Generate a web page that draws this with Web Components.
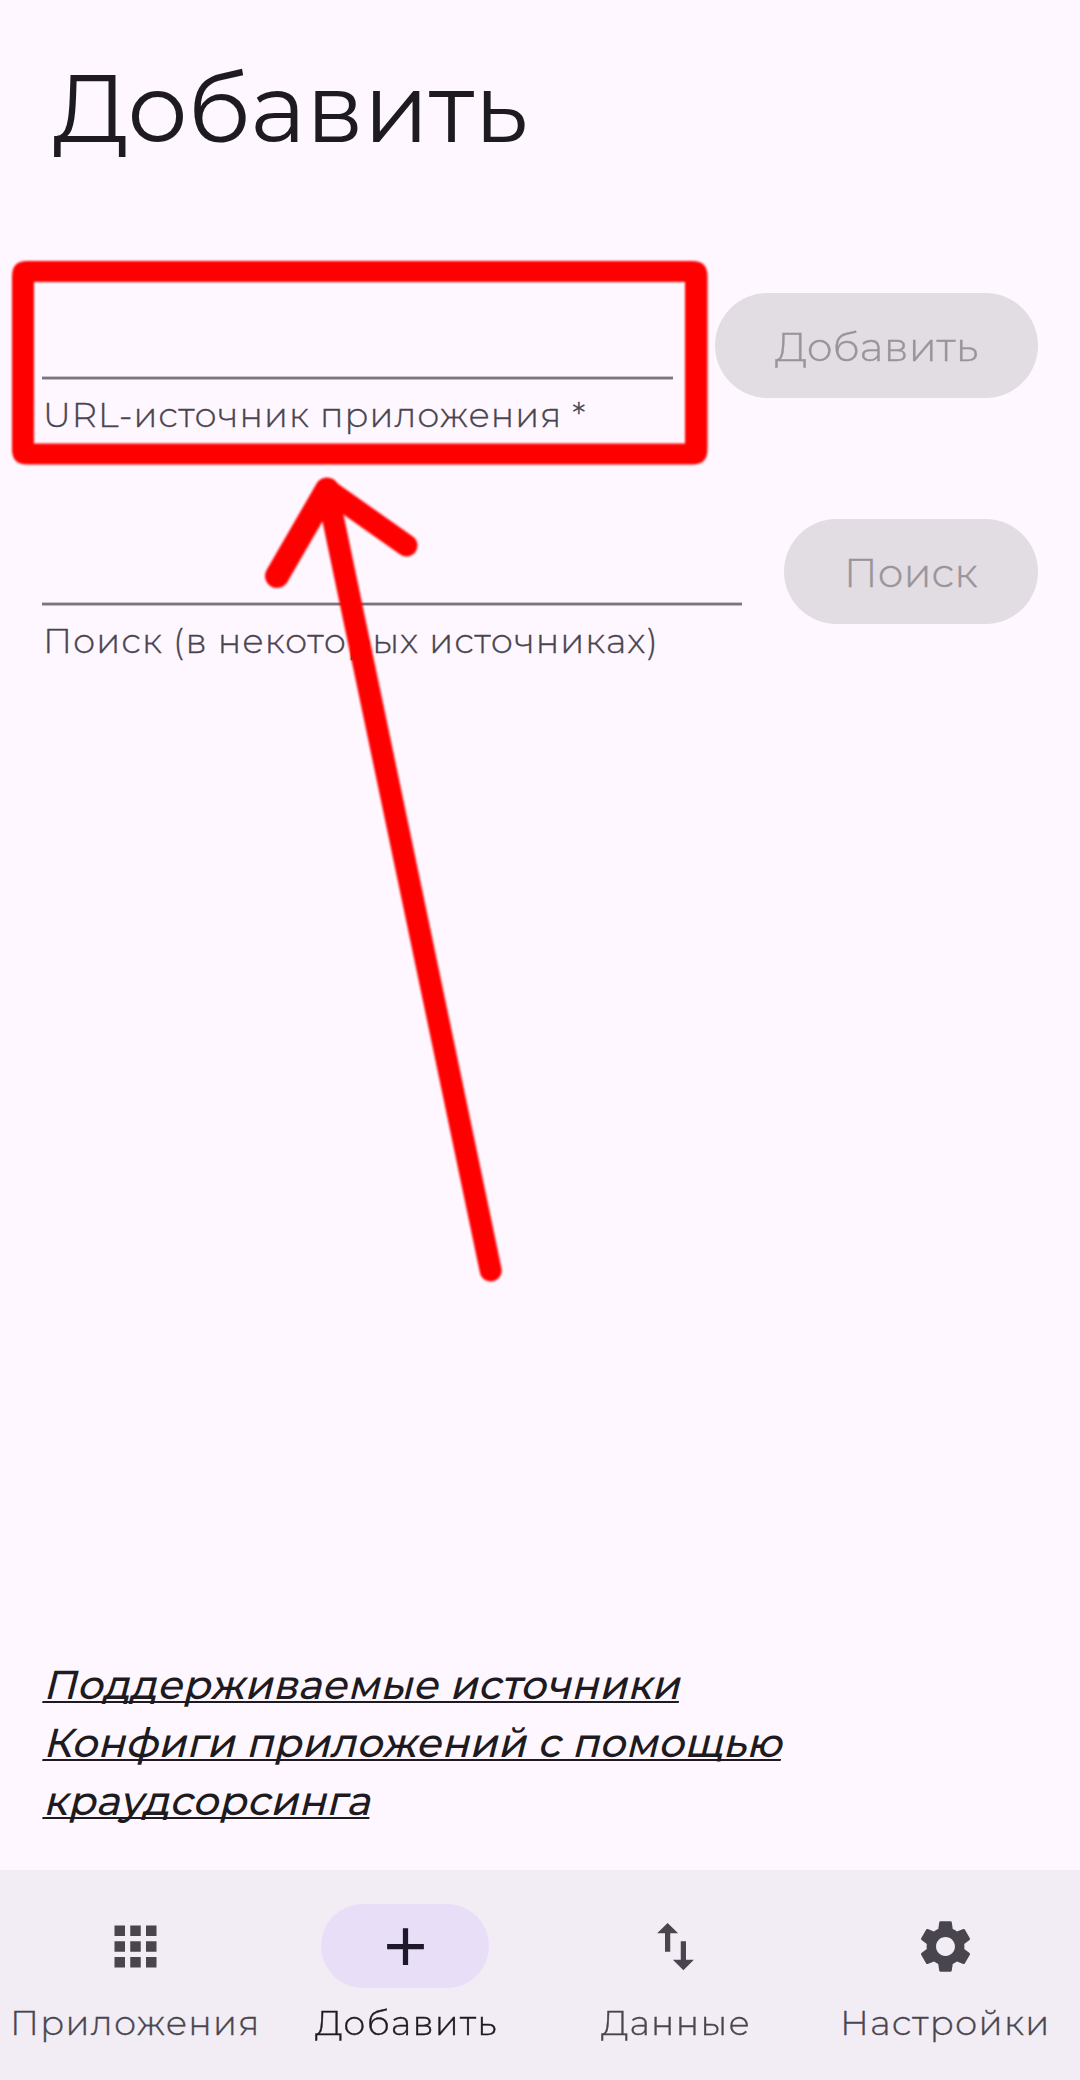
<!DOCTYPE html>
<html lang="ru">
<head>
<meta charset="utf-8">
<title>Добавить</title>
<style>
html,body{margin:0;padding:0}
body{width:1080px;height:2080px;overflow:hidden;background:#fef7ff;font-family:Montserrat,Inter,"Open Sans",sans-serif;color:#1d1b20}
</style>
</head>
<body>
<add-screen></add-screen>
<script>
const define = (name, html, ready) => {
  const tpl = document.createElement('template');
  tpl.innerHTML = html;
  customElements.define(name, class extends HTMLElement {
    connectedCallback() {
      if (this.shadowRoot) return;
      this.attachShadow({mode: 'open'}).append(tpl.content.cloneNode(true));
      if (ready) ready.call(this, this.shadowRoot);
    }
  });
};

/* One line of text stretched to an exact width. "ink" fits the visible glyphs, otherwise the advance box; "link" slants and underlines it. */
define('fit-text', `<style>
:host{display:block;white-space:nowrap;overflow:visible}
span{display:inline-block;transform-origin:0 75%;white-space:nowrap}
:host([link]) span{text-decoration:underline;text-decoration-thickness:2.4px;text-underline-offset:1.5px;text-decoration-skip-ink:none}
</style><span></span>`, function (root) {
  const span = root.querySelector('span');
  span.textContent = this.getAttribute('text');
  const target = +this.getAttribute('w');
  this.style.width = target + 'px';
  const cs = getComputedStyle(span);
  if (this.hasAttribute('ink')) {
    const ctx = document.createElement('canvas').getContext('2d');
    ctx.font = `${cs.fontWeight} ${cs.fontSize} ${cs.fontFamily}`;
    if (cs.letterSpacing !== 'normal') ctx.letterSpacing = cs.letterSpacing;
    const m = ctx.measureText(span.textContent);
    const k = target / (m.actualBoundingBoxRight + m.actualBoundingBoxLeft);
    span.style.transform = `translateX(${m.actualBoundingBoxLeft * k}px) scaleX(${k})`;
  } else {
    span.style.transform = `skewX(-14deg) scaleX(${target / span.getBoundingClientRect().width})`;
  }
});

define('page-title', `<style>
:host{display:block;padding:48px 0 0 54px;height:125px;font-size:95.5px;line-height:120px;font-weight:400}
</style><fit-text ink w="471" text="Добавить"></fit-text>`);

define('pill-button', `<style>
:host{display:flex;align-items:center;justify-content:center;box-sizing:border-box;height:105px;border-radius:52.5px;background:#e2dce3;color:#99949a;font-size:40.4px;line-height:48px;font-weight:300;-webkit-text-stroke:.4px;letter-spacing:.26px;flex:none;padding-top:2px}
</style><slot></slot>`);

define('text-field', `<style>
:host{display:block;flex:1;padding-top:83px}
.line{height:4px;background:linear-gradient(#c9c3cd 1px,#7a757f 1px 3px,#c0bac4 3px)}
.label{padding:13px 0 0 4.5px;font-size:34.65px;line-height:44px;font-weight:300;-webkit-text-stroke:.35px;letter-spacing:1.05px;color:#49454f}
</style><div class="line"></div><div class="label"><slot></slot></div>`);

define('form-row', `<style>
:host{display:flex;align-items:flex-start;padding:0 42px;height:226px}
</style><slot></slot>`);

define('source-link', `<style>
:host{display:block;font-size:40.4px;line-height:58px;font-weight:500;letter-spacing:.3px}
</style><slot></slot>`);

define('nav-item', `<style>
:host{display:flex;flex-direction:column;align-items:center;width:270px;color:#49454f}
.pill{display:flex;align-items:center;justify-content:center;width:168px;height:84px;border-radius:42px}
:host([active]){color:#1d1b20}
:host([active]) .pill{background:#e8def8;color:#1d192b}
svg{width:63px;height:63px;display:block;fill:currentColor}
.label{font-size:34.65px;line-height:44px;font-weight:300;-webkit-text-stroke:.35px;letter-spacing:1.3px;padding-top:13px}
</style><div class="pill"><svg viewBox="0 0 24 24"><path/></svg></div><div class="label"><slot></slot></div>`, function (root) {
  root.querySelector('path').setAttribute('d', {
    apps: 'M4 8h4V4H4v4zm6 12h4v-4h-4v4zm-6 0h4v-4H4v4zm0-6h4v-4H4v4zm6 0h4v-4h-4v4zm6-10v4h4V4h-4zm-6 4h4V4h-4v4zm6 6h4v-4h-4v4zm0 6h4v-4h-4v4z',
    add: 'M19 13h-6v6h-2v-6H5v-2h6V5h2v6h6v2z',
    swap: 'M16 17.01V10h-2v7.01h-3L15 21l4-3.99h-3zM9 3L5 6.99h3V14h2V6.99h3L9 3z',
    gear: 'M19.14 12.94c.04-.3.06-.61.06-.94 0-.32-.02-.64-.07-.94l2.03-1.58c.18-.14.23-.41.12-.61l-1.92-3.32c-.12-.22-.37-.29-.59-.22l-2.39.96c-.5-.38-1.03-.7-1.62-.94l-.36-2.54c-.04-.24-.24-.41-.48-.41h-3.84c-.24 0-.43.17-.47.41l-.36 2.54c-.59.24-1.13.57-1.62.94l-2.39-.96c-.22-.08-.47 0-.59.22L2.74 8.87c-.12.21-.08.47.12.61l2.03 1.58c-.05.3-.09.63-.09.94s.02.64.07.94l-2.03 1.58c-.18.14-.23.41-.12.61l1.92 3.32c.12.22.37.29.59.22l2.39-.96c.5.38 1.03.7 1.62.94l.36 2.54c.05.24.24.41.48.41h3.84c.24 0 .44-.17.47-.41l.36-2.54c.59-.24 1.13-.56 1.62-.94l2.39.96c.22.08.47 0 .59-.22l1.92-3.32c.12-.22.07-.47-.12-.61l-2.01-1.58zM12 15.6c-1.98 0-3.6-1.62-3.6-3.6s1.62-3.6 3.6-3.6 3.6 1.62 3.6 3.6-1.62 3.6-3.6 3.6z'
  }[this.getAttribute('icon')]);
});

define('nav-bar', `<style>
:host{display:flex;box-sizing:border-box;height:210px;padding-top:34px;background:#f2ecf4}
</style><slot></slot>`);

/* Hand-drawn red frame and arrow laid over the form */
define('red-marker', `<style>
:host{position:absolute;left:0;top:0;width:1080px;height:2080px;pointer-events:none}
svg{display:block;filter:blur(.8px)}
</style><svg width="1080" height="2080" fill="none" stroke="#f00" stroke-linecap="round" stroke-linejoin="round">
<path fill="#f00" stroke="none" fill-rule="evenodd" d="M27 261H692.500Q707.500 261 707.500 276V449.500Q707.500 464.500 692.500 464.500H27Q12 464.500 12 449.500V276Q12 261 27 261ZM34 282V443.500H685V282Z"/>
<path stroke-width="24" d="M277 576L327 489.500"/>
<path stroke-width="22" d="M327 489.500L406.500 545.500"/>
<path stroke-width="22" d="M327 489.500L490.700 1270.500"/>
</svg>`);

define('add-screen', `<style>
:host{display:flex;flex-direction:column;position:relative;width:1080px;height:2080px;overflow:hidden}
.form{padding-top:120px}
.links{margin-top:auto;padding:0 43px 40px}
.b1{width:323px;padding-right:2px}.b2{width:254px;padding-left:4px}
.f1{margin-right:42px}.f2{margin-right:42px}
</style>
<page-title></page-title>
<div class="form">
<form-row><text-field class="f1"><fit-text ink w="538.5" text="URL-источник приложения *"></fit-text></text-field><pill-button class="b1"><fit-text ink w="202" text="Добавить"></fit-text></pill-button></form-row>
<form-row><text-field class="f2"><fit-text ink w="607.5" text="Поиск (в некоторых источниках)"></fit-text></text-field><pill-button class="b2"><fit-text ink w="128.5" text="Поиск"></fit-text></pill-button></form-row>
</div>
<div class="links">
<source-link><fit-text link w="636.5" text="Поддерживаемые источники"></fit-text></source-link>
<source-link><fit-text link w="738.5" text="Конфиги приложений с помощью"></fit-text><fit-text link w="327" text="краудсорсинга"></fit-text></source-link>
</div>
<nav-bar>
<nav-item icon="apps"><fit-text ink w="242.5" text="Приложения"></fit-text></nav-item>
<nav-item icon="add" active><fit-text ink w="180.5" text="Добавить"></fit-text></nav-item>
<nav-item icon="swap"><fit-text ink w="147.5" text="Данные"></fit-text></nav-item>
<nav-item icon="gear"><fit-text ink w="201.5" text="Настройки"></fit-text></nav-item>
</nav-bar>
<red-marker></red-marker>`);
</script>
</body>
</html>
